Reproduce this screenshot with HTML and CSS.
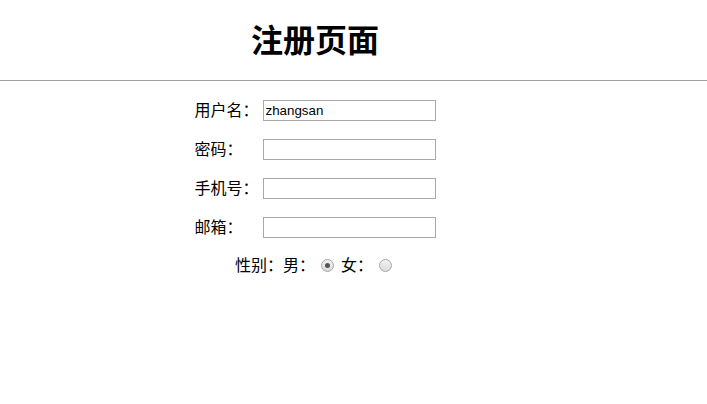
FILE: index.html
```html
<!DOCTYPE html>
<html lang="zh-CN">
<head>
<meta charset="utf-8">
<title>注册页面</title>
<link rel="stylesheet" href="styles.css">
</head>
<body>
<header class="header">
  <h1 class="title">注册页面</h1>
</header>
<form class="form">
  <div class="row"><label class="label">用户名：</label><input class="field" type="text" value="zhangsan"></div>
  <div class="row"><label class="label">密码：</label><input class="field" type="password"></div>
  <div class="row"><label class="label">手机号：</label><input class="field" type="text"></div>
  <div class="row"><label class="label">邮箱：</label><input class="field" type="text"></div>
  <div class="row row-gender">
    <span class="text">性别：</span>
    <span class="text">男：</span><input class="radio" type="radio" name="sex" checked>
    <span class="text">女：</span><input class="radio" type="radio" name="sex">
  </div>
</form>
</body>
</html>
```
FILE: styles.css
```css
html, body {
  margin: 0;
  padding: 0;
  background: #fff;
  color: #000;
  font-family: "Noto Sans CJK SC", "Liberation Sans", sans-serif;
  font-size: 16px;
}
.header {
  box-sizing: border-box;
  height: 81px;
  border-bottom: 1px solid #a0a0a0;
}
.title {
  width: 630px;
  margin: 0;
  padding-top: 18px;
  line-height: 40px;
  font-size: 32px;
  font-weight: bold;
  text-align: center;
}
.form {
  width: 630px;
  padding-top: 10px;
}
.row {
  height: 39px;
  display: flex;
  justify-content: center;
  align-items: center;
}
.label {
  width: 68px;
  line-height: 20px;
  padding-bottom: 3px;
}
.field {
  box-sizing: border-box;
  width: 173px;
  height: 21px;
  margin: 0;
  padding: 1px 2px;
  border: 1px solid #a9a9a9;
  border-radius: 0;
  font-family: "Liberation Sans", Arial, sans-serif;
  font-size: 13.33px;
  color: #000;
  outline: none;
}
.row-gender {
  height: 36px;
  padding-left: 4px;
}
.text {
  line-height: 20px;
  padding-bottom: 2px;
}
.radio {
  appearance: none;
  -webkit-appearance: none;
  box-sizing: border-box;
  width: 13px;
  height: 13px;
  margin: 0 7px 0 6px;
  border: 1px solid #a6a6a6;
  border-radius: 50%;
  background: linear-gradient(#f2f2f2, #dcdcdc);
  position: relative;
}
.radio:checked::after {
  content: "";
  position: absolute;
  left: 3px;
  top: 3px;
  width: 5px;
  height: 5px;
  border-radius: 50%;
  background: #555;
}
```
